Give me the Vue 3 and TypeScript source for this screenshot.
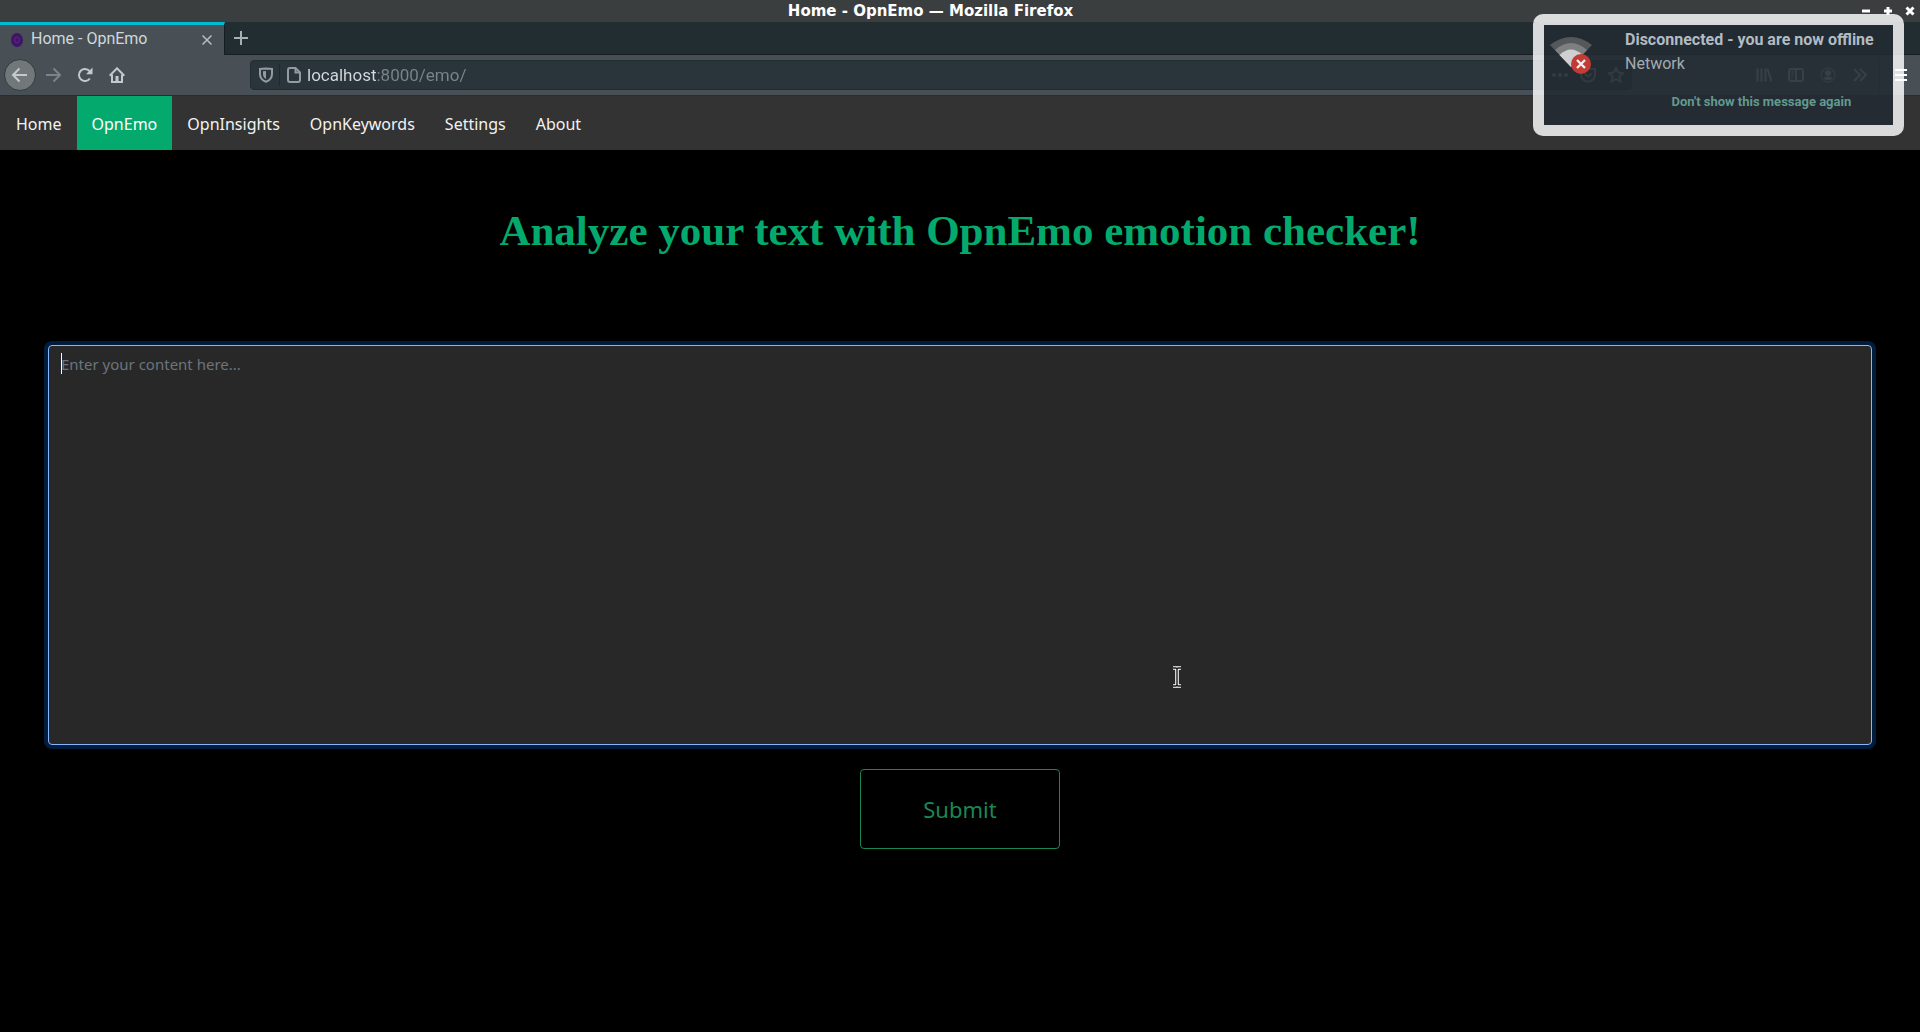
<script setup lang="ts">
import { ref } from 'vue'

interface NavLink {
  label: string
  href: string
  active?: boolean
}

const address = ref('localhost:8000/emo/')
const content = ref('')

const links: NavLink[] = [
  { label: 'Home', href: '#home' },
  { label: 'OpnEmo', href: '#emo', active: true },
  { label: 'OpnInsights', href: '#insights' },
  { label: 'OpnKeywords', href: '#keywords' },
  { label: 'Settings', href: '#settings' },
  { label: 'About', href: '#about' },
]
</script>

<template>
  <div class="window">
    <header class="titlebar">
      <span class="window-title">Home - OpnEmo — Mozilla Firefox</span>
      <div class="window-controls">
        <button type="button" aria-label="Minimize">
          <svg width="10" height="10" viewBox="0 0 10 10"><path d="M1 5h8" /></svg>
        </button>
        <button type="button" aria-label="Maximize">
          <svg width="10" height="10" viewBox="0 0 10 10"><path d="M1 5h8M5 1v8" /></svg>
        </button>
        <button type="button" aria-label="Close window">
          <svg width="10" height="10" viewBox="0 0 10 10"><path d="M1.500 1.500l7 7M8.500 1.500l-7 7" /></svg>
        </button>
      </div>
    </header>

    <div class="tabstrip">
      <div class="tab">
        <svg class="favicon" width="12" height="14" viewBox="0 0 12 14">
          <ellipse cx="6" cy="7" rx="6" ry="7" fill="#3f1469" />
          <ellipse cx="6" cy="7" rx="2.200" ry="3" fill="none" stroke="#5a2c75" stroke-width="1" />
        </svg>
        <span class="tab-title">Home - OpnEmo</span>
        <button type="button" class="tab-close" aria-label="Close tab">
          <svg width="10" height="10" viewBox="0 0 10 10"><path d="M.5.5l9 9M9.500.5l-9 9" /></svg>
        </button>
      </div>
      <button type="button" class="new-tab" aria-label="New tab">
        <svg width="14" height="14" viewBox="0 0 14 14"><path d="M7 0v14M0 7h14" /></svg>
      </button>
    </div>

    <div class="toolbar">
      <button type="button" class="back" aria-label="Back">
        <svg width="16" height="16" viewBox="0 0 16 16"><path d="M15 8H1.500M7.500 1.500L1 8l6.500 6.500" /></svg>
      </button>
      <button type="button" class="tool dim" aria-label="Forward">
        <svg width="16" height="16" viewBox="0 0 16 16"><path d="M1 8h13.500M8.500 1.500L15 8l-6.500 6.500" /></svg>
      </button>
      <button type="button" class="tool" aria-label="Reload">
        <svg width="16" height="16" viewBox="0 0 16 16">
          <path d="M12.800 11.500A6 6 0 1 1 12.500 4" />
          <path d="M15.500 .6v6.600H9z" fill="currentColor" stroke="none" />
        </svg>
      </button>
      <button type="button" class="tool" aria-label="Home page">
        <svg width="16" height="16" viewBox="0 0 16 16">
          <path d="M.7 8.700L8 1.300l7.300 7.400" />
          <path d="M3 7.500V15h10V7.500" />
          <path d="M6.500 14.500V9h3v5.500z" fill="currentColor" stroke="none" />
        </svg>
      </button>

      <div class="urlbar">
        <svg class="shield" width="14" height="16" viewBox="0 0 14 16">
          <path d="M7 1.500L13 2v5c0 4-2.500 6.500-6 7.800C3.500 13.500 1 11 1 7V2z" />
          <path d="M7 4v8C4.700 10.800 4 9.200 4 7V4.300z" fill="currentColor" stroke="none" />
        </svg>
        <span class="url-divider"></span>
        <svg class="page-icon" width="14" height="16" viewBox="0 0 14 16">
          <path d="M8.500 1H3a2 2 0 0 0-2 2v10a2 2 0 0 0 2 2h8a2 2 0 0 0 2-2V5.500z" />
          <path d="M8.500 1v4.500H13" />
        </svg>
        <input v-model="address" class="address" type="text" aria-label="Address" spellcheck="false" />
        <div class="url-actions">
          <svg width="16" height="16" viewBox="0 0 16 16">
            <g fill="currentColor" stroke="none">
              <circle cx="2" cy="8" r="2" /><circle cx="8" cy="8" r="2" /><circle cx="14" cy="8" r="2" />
            </g>
          </svg>
          <svg width="16" height="16" viewBox="0 0 16 16">
            <path d="M1 2h14v5.500a7 7 0 0 1-14 0z" /><path d="M4.500 6.500L8 9.800l3.500-3.300" />
          </svg>
          <svg width="16" height="16" viewBox="0 0 16 16">
            <path d="M8 1l2.100 4.600 5 .6-3.700 3.400 1 4.900L8 12.100l-4.400 2.400 1-4.900L.9 6.200l5-.6z" />
          </svg>
        </div>
      </div>

      <button type="button" class="tool" aria-label="Library">
        <svg width="16" height="16" viewBox="0 0 16 16"><path d="M1.500 1.500v13M5.500 1.500v13M9.500 1.500v13M11.500 2l4 12.500" /></svg>
      </button>
      <button type="button" class="tool" aria-label="Sidebars">
        <svg width="16" height="16" viewBox="0 0 16 16">
          <rect x="1" y="2" width="14" height="12" rx="2" /><path d="M8 2v12" />
          <path d="M3 5h3M3 7.500h3M3 10h2" stroke-width="1" />
        </svg>
      </button>
      <button type="button" class="tool" aria-label="Account">
        <svg width="16" height="16" viewBox="0 0 16 16">
          <circle cx="8" cy="8" r="7" stroke-width="1" />
          <circle cx="8" cy="6" r="3" fill="currentColor" stroke="none" />
          <path d="M3.500 11c2.500-2 6.500-2 9 0-2 3-7 3-9 0z" fill="currentColor" stroke="none" />
        </svg>
      </button>
      <button type="button" class="tool" aria-label="More tools">
        <svg width="16" height="16" viewBox="0 0 16 16"><path d="M2 2l6 6-6 6M8 2l6 6-6 6" /></svg>
      </button>
      <span class="tool-divider"></span>
      <button type="button" class="tool menu" aria-label="Open menu">
        <svg width="12" height="12" viewBox="0 0 12 12"><path d="M0 1h12M0 6h12M0 11h12" /></svg>
      </button>
    </div>

    <nav class="topnav">
      <a v-for="link in links" :key="link.label" :href="link.href" :class="{ active: link.active }">{{ link.label }}</a>
    </nav>

    <main class="page">
      <h1>Analyze your text with OpnEmo emotion checker!</h1>
      <form class="checker" @submit.prevent>
        <div class="field">
          <textarea v-model="content" aria-label="Content" placeholder="Enter your content here..."></textarea>
          <span class="caret"></span>
          <svg class="pointer" width="10" height="22" viewBox="0 0 10 22">
            <path d="M1 2h3l1 1 1-1h3M5 3v16M1 20h3l1-1 1 1h3" fill="none" stroke="#fff" stroke-width="3.600" />
            <path d="M1 2h3l1 1 1-1h3M5 3v16M1 20h3l1-1 1 1h3" fill="none" stroke="#161616" stroke-width="1.400" />
          </svg>
        </div>
        <button type="submit" class="submit">Submit</button>
      </form>
    </main>

    <aside class="notification" role="status">
      <svg class="wifi" width="42" height="38" viewBox="0 0 42 38">
        <path d="M21 30L0 8Q21-8 42 8z" fill="#55585a" />
        <path d="M21 30L5 13Q21-1 37 13z" fill="#7d7f81" />
        <path d="M21 30L9.500 18Q21 7 32.500 18z" fill="#cfd0d1" />
        <circle cx="31" cy="27" r="10" fill="#c23b34" />
        <path d="M27 23l8 8M35 23l-8 8" stroke="#eee" stroke-width="2.400" />
      </svg>
      <div class="message">
        <strong>Disconnected - you are now offline</strong>
        <span>Network</span>
        <button type="button">Don't show this message again</button>
      </div>
    </aside>
  </div>
</template>

<style>
html,
body {
  background: #000;
}
</style>

<style scoped>
* {
  box-sizing: border-box;
}

.window {
  position: relative;
  min-height: 100vh;
  background: #000;
  font-family: "Noto Sans", sans-serif;
}

button {
  display: flex;
  align-items: center;
  justify-content: center;
  padding: 0;
  border: 0;
  background: none;
  color: inherit;
  font-family: inherit;
}

svg {
  display: block;
  flex: none;
  fill: none;
  stroke: currentColor;
  stroke-width: 2;
}

.titlebar {
  display: flex;
  align-items: center;
  height: 22px;
  padding: 0 5px 0 0;
  background: #3b3e3f;
  color: #fff;
}

.window-title {
  flex: 1;
  font: bold 15px/22px "DejaVu Sans", sans-serif;
  text-align: center;
}

.window-controls {
  display: flex;
  gap: 12px;
}

.window-controls svg {
  stroke-width: 3;
}

.tabstrip {
  display: flex;
  height: 33px;
  background: #222d32;
  border-bottom: 1px solid #171e22;
}

.tab {
  display: flex;
  align-items: center;
  width: 225px;
  height: 33px;
  padding: 0 12px 0 11px;
  border-top: 3px solid #00bcd4;
  border-right: 1px solid #171e22;
  background: #485055;
  color: #cfd8dc;
}

.favicon {
  stroke: none;
}

.tab-title {
  flex: 1;
  padding: 0 0 2px 8px;
  font: 16px/24px Roboto, sans-serif;
}

.tab-close {
  color: #b5bec2;
}

.tab-close svg {
  stroke-width: 1.5;
}

.new-tab {
  width: 32px;
  color: #a6afb3;
}

.toolbar {
  display: flex;
  align-items: center;
  height: 41px;
  padding: 0 3px 0 4px;
  border-bottom: 1px solid #272e32;
  background: #485055;
  color: #c3cacd;
}

.back {
  width: 32px;
  height: 32px;
  margin-right: 1px;
  border: 1px solid #33393c;
  border-radius: 50%;
  background: #72777a;
}

.tool {
  width: 32px;
  height: 32px;
}

.dim {
  color: #7c8488;
}

.urlbar {
  display: flex;
  align-items: center;
  flex: 1;
  height: 30px;
  margin: 0 116px 0 117px;
  padding: 0 7px 0 8px;
  border: 1px solid #232c31;
  border-radius: 4px;
  background: #2a353b;
  color: #939ba0;
}

.url-divider {
  width: 1px;
  height: 22px;
  margin: 0 7px 0 6px;
  background: #20292e;
}

.address {
  flex: 1;
  min-width: 0;
  height: 28px;
  margin-left: 6px;
  padding: 0;
  border: 0;
  outline: 0;
  background: linear-gradient(90deg, #d5dbde 70px, #7b8488 70px);
  background-clip: text;
  color: transparent;
  font: 17px/24px Roboto, sans-serif;
}

.url-actions {
  display: flex;
  gap: 12px;
}

.tool-divider {
  width: 1px;
  height: 34px;
  margin: 0 5px 0 3px;
  background: #343c40;
}

.menu {
  color: #fff;
}

.topnav {
  display: flex;
  padding-left: 1px;
  background: #333;
}

.topnav a {
  padding: 16px 15px 14px;
  color: #f2f2f2;
  font-size: 16px;
  line-height: 24px;
  text-decoration: none;
}

.topnav a.active {
  background: #04aa6d;
  color: #fff;
}

.page {
  padding: 49px 48px 48px;
}

h1 {
  margin: 0;
  color: #04aa6d;
  font: bold 43px/64px "Liberation Serif", serif;
  text-align: center;
}

.checker {
  display: flex;
  flex-direction: column;
  align-items: center;
  gap: 24px;
  margin-top: 82px;
}

.field {
  position: relative;
  width: 100%;
}

textarea {
  display: block;
  width: 100%;
  height: 400px;
  padding: 6px 12px;
  border: 1px solid #86b7fe;
  border-radius: 4px;
  outline: 0;
  box-shadow: 0 0 0 4px #001c3e;
  background: #282828;
  color: #fff;
  font: 15px/24px "Noto Sans", sans-serif;
  resize: none;
}

textarea::placeholder {
  color: #6c757d;
  opacity: 1;
}

.caret {
  position: absolute;
  top: 8px;
  left: 13px;
  width: 1px;
  height: 21px;
  background: #fff;
}

.pointer {
  position: absolute;
  top: 321px;
  left: 1124px;
}

.submit {
  width: 200px;
  height: 80px;
  border: 1px solid #198754;
  border-radius: 4px;
  color: #198754;
  font-size: 22px;
}

.notification {
  position: absolute;
  top: 14px;
  right: 16px;
  display: flex;
  width: 371px;
  height: 122px;
  padding: 0 7px 0 6px;
  border: 11px solid rgba(255, 255, 255, 0.82);
  border-radius: 10px;
  background: rgba(35, 43, 50, 0.87);
  background-clip: padding-box;
}

.wifi {
  margin-top: 12px;
  stroke: none;
}

.message {
  display: flex;
  flex-direction: column;
  margin-left: 33px;
  color: #b3bbc2;
  font: 16px/24px Roboto, sans-serif;
  white-space: nowrap;
}

.message strong {
  padding-top: 3px;
}

.message span {
  color: #a3abb1;
}

.message button {
  margin-top: 14px;
  padding-left: 24px;
  color: #629a90;
  font-size: 13px;
  font-weight: bold;
  line-height: 24px;
}
</style>
